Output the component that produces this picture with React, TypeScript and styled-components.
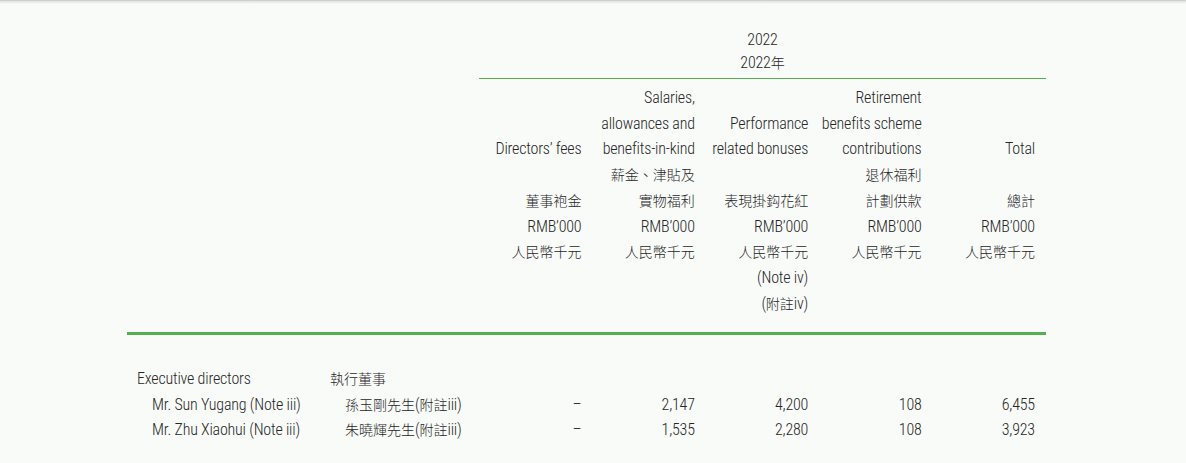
import React, { FC, ReactNode } from 'react'
import styled, { createGlobalStyle } from 'styled-components'

const GREEN = '#55b052'
const INK = '#262626'
const COLS = '193px 159px repeat(5, 113.4px)'

// CJK runs get their own family and size so they sit as narrow as the print
const CJK = /([\u3000-\u303f\u3400-\u9fff\uff00-\uffef]+)/

const mixed = (text: string): ReactNode =>
	text.split(CJK).map((part, i) =>
		i % 2 === 1 ? <StyledZh key={i}>{part}</StyledZh> : part
	)

interface HeaderColumn {
	lines: string[]
}

// each header column is laid out on the same 9 baselines
const headerColumns: HeaderColumn[] = [
	{ lines: ['', '', 'Directors’ fees', '', '董事袍金', 'RMB’000', '人民幣千元', '', ''] },
	{
		lines: [
			'Salaries,',
			'allowances and',
			'benefits-in-kind',
			'薪金、津貼及',
			'實物福利',
			'RMB’000',
			'人民幣千元',
			'',
			'',
		],
	},
	{
		lines: [
			'',
			'Performance',
			'related bonuses',
			'',
			'表現掛鈎花紅',
			'RMB’000',
			'人民幣千元',
			'(Note iv)',
			'(附註iv)',
		],
	},
	{
		lines: [
			'Retirement',
			'benefits scheme',
			'contributions',
			'退休福利',
			'計劃供款',
			'RMB’000',
			'人民幣千元',
			'',
			'',
		],
	},
	{ lines: ['', '', 'Total', '', '總計', 'RMB’000', '人民幣千元', '', ''] },
]

interface Director {
	en: string
	zh: string
	values: string[]
}

const directors: Director[] = [
	{
		en: 'Mr. Sun Yugang (Note iii)',
		zh: '孫玉剛先生(附註iii)',
		values: ['–', '2,147', '4,200', '108', '6,455'],
	},
	{
		en: 'Mr. Zhu Xiaohui (Note iii)',
		zh: '朱曉輝先生(附註iii)',
		values: ['–', '1,535', '2,280', '108', '3,923'],
	},
]

const App: FC = () => {
	return (
		<>
			<GlobalStyle />
			<StyledTopShade />
			<StyledPage>
				<StyledGridRow>
					<StyledYearHead>
						<div>2022</div>
						<div>{mixed('2022年')}</div>
					</StyledYearHead>
				</StyledGridRow>
				<StyledHeaderRow>
					{headerColumns.map((col, i) => (
						<StyledHeaderCell key={i} $first={i === 0}>
							{col.lines.map((line, j) => (
								<StyledLine key={j}>{line ? mixed(line) : '\u00a0'}</StyledLine>
							))}
						</StyledHeaderCell>
					))}
				</StyledHeaderRow>
				<StyledRule />
				<StyledSectionRow>
					<StyledLabel>Executive directors</StyledLabel>
					<StyledLabel>{mixed('執行董事')}</StyledLabel>
				</StyledSectionRow>
				{directors.map((d) => (
					<StyledGridRow key={d.en}>
						<StyledLabel $indent>{d.en}</StyledLabel>
						<StyledLabel $indent>{mixed(d.zh)}</StyledLabel>
						{d.values.map((v, i) => (
							<StyledNumber key={i}>{v}</StyledNumber>
						))}
					</StyledGridRow>
				))}
			</StyledPage>
		</>
	)
}

export default App

const GlobalStyle = createGlobalStyle`
	html, body {
		margin: 0;
		padding: 0;
		background: #f9fbf9;
	}
	body {
		font-family: 'Liberation Sans Narrow', 'Roboto Condensed', 'Noto Sans CJK TC', sans-serif;
		font-size: 16px;
		font-weight: 300;
		letter-spacing: -0.2px;
		color: ${INK};
	}
`

const StyledZh = styled.span`
	font-family: 'Noto Sans CJK TC', sans-serif;
	font-size: 14px;
	letter-spacing: 0;
	font-weight: 300;
`

const StyledTopShade = styled.div`
	height: 4px;
	background: linear-gradient(#c4c4c4, #e6e8e6 40%, #f9fbf9);
`

const StyledPage = styled.div`
	padding: 25px 0 0 127px;
	width: 919px;
`

const StyledGridRow = styled.div`
	display: grid;
	grid-template-columns: ${COLS};
	line-height: 25.5px;
`

const StyledYearHead = styled.div`
	grid-column: 3 / 8;
	text-align: center;
	line-height: 22px;
	padding-bottom: 4px;
	border-bottom: 1px solid ${GREEN};
`

const StyledHeaderRow = styled(StyledGridRow)`
	margin-top: 6px;
	line-height: 25.7px;
`

const StyledHeaderCell = styled.div<{ $first?: boolean }>`
	grid-column: ${({ $first }) => ($first ? '3' : 'auto')};
	display: flex;
	flex-direction: column;
	align-items: flex-end;
	padding-right: 11px;
`

const StyledLine = styled.div`
	white-space: nowrap;
`

const StyledRule = styled.div`
	margin-top: 16px;
	height: 3px;
	background: ${GREEN};
`

const StyledSectionRow = styled(StyledGridRow)`
	margin-top: 31px;
`

const StyledLabel = styled.div<{ $indent?: boolean }>`
	padding-left: ${({ $indent }) => ($indent ? '25px' : '10px')};
	white-space: nowrap;
`

const StyledNumber = styled.div`
	text-align: right;
	padding-right: 11px;
`
